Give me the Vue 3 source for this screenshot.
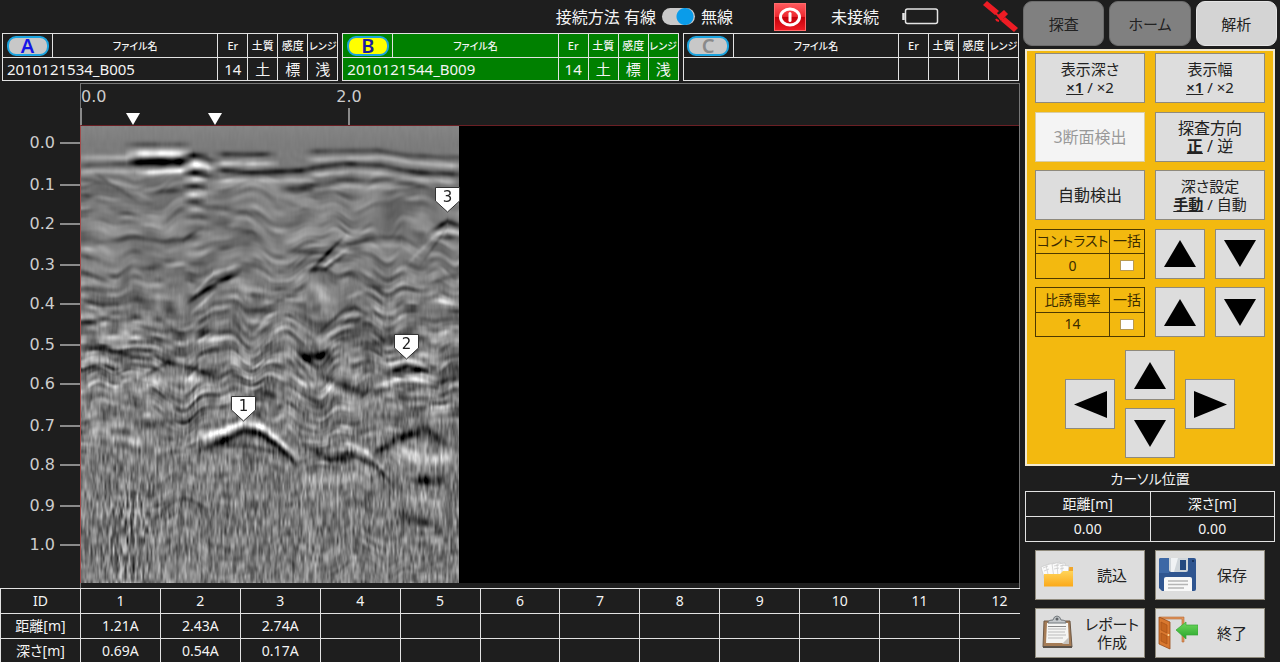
<script setup>
import { onMounted, ref } from 'vue'

const files = [
  { key: 'A', name: '2010121534_B005', values: ['14', '土', '標', '浅'] },
  { key: 'B', name: '2010121544_B009', values: ['14', '土', '標', '浅'] },
  { key: 'C', name: '', values: ['', '', '', ''] },
]
const active = 'B'
const columns = Array.from({ length: 12 }, (_, i) => i + 1)
const rows = [
  { label: '距離[m]', values: ['1.21A', '2.43A', '2.74A'] },
  { label: '深さ[m]', values: ['0.69A', '0.54A', '0.17A'] },
]
const depths = [60, 102, 141, 182, 221, 262, 301, 343, 382, 423, 462].map((top, i) => ({
  label: (i / 10).toFixed(1),
  top,
}))
const distances = [
  { label: '0.0', left: 0 },
  { label: '2.0', left: 268 },
]
const pins = [52, 134]
const markers = [
  { id: 1, left: 162, top: 270 },
  { id: 2, left: 325, top: 208 },
  { id: 3, left: 366, top: 61 },
]
const adjusters = [
  { label: 'コントラスト', value: '0' },
  { label: '比誘電率', value: '14' },
]

/* Reflections: [strength, thickness, x, y, x, y, ...] */
const echoes = [
  [-40, 3, 50, 18, 103, 18], [150, 4, 52, 27, 103, 27], [50, 3, 0, 31, 50, 31],
  [-190, 4, 54, 36, 104, 35], [-55, 3, 0, 39, 50, 37], [140, 3, 62, 46, 104, 44], [45, 3, 0, 45, 60, 45],
  [-150, 3, 107, 29, 119, 29], [150, 4, 107, 38, 121, 38], [-150, 3, 108, 46, 118, 46],
  [100, 3, 109, 53, 118, 53], [-120, 3, 109, 60, 118, 60], [100, 3, 109, 68, 118, 68],
  [-90, 3, 109, 75, 117, 75], [60, 3, 109, 83, 117, 83], [-40, 3, 108, 91, 118, 91],
  [-45, 3, 108, 112, 119, 109], [45, 3, 108, 118, 120, 118], [-50, 3, 108, 137, 120, 137],
  [-75, 3, 120, 32, 132, 34], [90, 3, 120, 40, 132, 42], [-60, 3, 120, 50, 130, 50],
  [-75, 3, 139, 28, 190, 28], [85, 3, 137, 37, 190, 37], [-100, 3, 138, 44, 170, 46, 225, 44],
  [55, 3, 140, 54, 225, 54], [-65, 3, 205, 62, 225, 62],
  [-50, 3, 230, 25, 296, 24, 326, 29, 376, 31], [55, 3, 232, 33, 300, 31, 330, 36, 376, 40],
  [-90, 3, 226, 42, 262, 37, 299, 39, 336, 46, 376, 48], [50, 3, 230, 49, 270, 45, 300, 47, 336, 53, 376, 56],
  [-60, 3, 225, 59, 262, 54, 305, 54, 340, 59], [35, 3, 230, 65, 266, 60, 320, 61],
  [-50, 3, 0, 53, 18, 55], [-55, 3, 75, 65, 100, 64], [-45, 3, 0, 68, 12, 71],
  [40, 3, 30, 55, 65, 71], [-35, 3, 18, 50, 52, 72],
  [-65, 3, 87, 114, 102, 113, 114, 106], [-35, 3, 12, 117, 54, 111, 88, 116],
  [-35, 3, 139, 82, 165, 86, 185, 98], [30, 3, 139, 88, 165, 92, 185, 104],
  [-35, 3, 139, 100, 170, 105, 180, 112], [-30, 3, 205, 76, 222, 82],
  [-125, 3, 354, 102, 366, 95, 378, 99], [100, 3, 358, 107, 366, 104, 377, 106], [-80, 3, 359, 111, 374, 111],
  [-105, 3, 236, 137, 256, 117], [100, 3, 243, 139, 260, 127], [-75, 3, 229, 144, 244, 142, 258, 132],
  [-95, 3, 264, 118, 279, 115], [-75, 3, 212, 125, 229, 125], [35, 3, 262, 110, 280, 106],
  [-40, 3, 285, 111, 320, 111, 340, 123], [35, 3, 288, 119, 320, 119, 336, 130],
  [-35, 3, 345, 130, 365, 102], [30, 3, 330, 133, 356, 107],
  [95, 3, 119, 160, 132, 147, 152, 142], [-150, 3, 112, 172, 126, 162, 136, 156, 152, 149],
  [95, 3, 116, 181, 129, 169], [-60, 3, 62, 142, 76, 142], [-50, 3, 114, 187, 127, 184],
  [60, 3, 0, 121, 10, 123], [-80, 3, 0, 129, 12, 132], [-55, 3, 0, 145, 20, 152],
  [-70, 3, 3, 160, 18, 164], [85, 3, 0, 186, 16, 187], [-85, 3, 0, 196, 14, 195], [-50, 3, 0, 173, 20, 180],
  [-45, 3, 20, 192, 50, 196, 80, 206, 105, 200], [-50, 3, 0, 221, 22, 221, 48, 229],
  [50, 3, 22, 211, 48, 211, 72, 219], [-40, 3, 110, 205, 150, 206], [35, 3, 102, 214, 150, 213],
  [-75, 6, 228, 184, 243, 180], [-75, 3, 266, 184, 273, 181, 284, 187], [65, 5, 230, 160, 242, 163],
  [-55, 4, 264, 148, 278, 148], [60, 3, 265, 171, 280, 166], [-60, 3, 165, 168, 178, 168],
  [-60, 3, 168, 184, 187, 184], [65, 3, 170, 195, 183, 196], [-60, 3, 168, 206, 182, 204],
  [70, 3, 354, 173, 376, 178], [-55, 3, 350, 156, 375, 148], [-40, 3, 285, 160, 320, 162],
  [-55, 3, 240, 204, 262, 184], [55, 3, 245, 210, 264, 193], [-50, 3, 290, 185, 312, 192],
  [-170, 5, 220, 231, 245, 230], [60, 4, 228, 215, 240, 213], [-75, 4, 295, 216, 315, 211, 342, 212],
  [-55, 3, 257, 213, 267, 213], [-50, 3, 358, 233, 378, 229], [-55, 3, 358, 256, 378, 251],
  [110, 3, 309, 238, 325, 233, 340, 237], [-130, 3, 309, 245, 326, 240, 339, 243],
  [70, 3, 296, 259, 326, 250, 346, 256], [-55, 3, 292, 266, 326, 257, 342, 260],
  [80, 4, 4, 232, 25, 234, 40, 240], [-70, 3, 10, 240, 25, 240, 40, 249],
  [-75, 3, 62, 250, 86, 236, 112, 242, 132, 250], [65, 4, 59, 264, 79, 254, 112, 252, 136, 260],
  [45, 5, 5, 262, 25, 260, 40, 266],
  [80, 5, 218, 257, 240, 258, 273, 274], [-85, 4, 245, 252, 279, 266], [-60, 7, 222, 278, 244, 282],
  [55, 5, 230, 301, 237, 301], [-45, 4, 57, 296, 90, 297, 118, 294], [35, 5, 5, 310, 75, 315],
  [150, 4, 122, 310, 139, 305, 162, 296, 182, 301, 209, 324],
  [-125, 4, 120, 323, 142, 314, 162, 305, 180, 308, 196, 319, 213, 336], [-50, 3, 150, 320, 174, 320],
  [-45, 4, 180, 293, 198, 300],
  [-95, 4, 229, 322, 249, 334, 272, 329, 296, 341, 306, 352], [85, 4, 265, 315, 286, 327, 300, 340],
  [-120, 5, 296, 327, 316, 312, 346, 304, 359, 312], [80, 7, 315, 327, 346, 334, 370, 330],
  [-50, 4, 356, 315, 378, 322], [60, 6, 345, 286, 368, 286],
  [-125, 5, 335, 354, 357, 354], [55, 8, 330, 373, 358, 372], [-50, 5, 315, 390, 340, 395, 360, 402],
  [-40, 5, 266, 376, 284, 376], [40, 6, 218, 355, 280, 350], [-35, 4, 75, 390, 90, 378, 118, 369],
]

const scan = ref(null)

function hash(x, y, seed) {
  let h = Math.imul(x, 374761393) + Math.imul(y, 668265263) + Math.imul(seed, 974634777)
  h = Math.imul(h ^ (h >>> 13), 1274126177)
  h = Math.imul(h ^ (h >>> 15), 2246822519)
  return ((h ^ (h >>> 16)) >>> 0) / 2147483648 - 1
}

function noise(x, y, seed) {
  const ix = Math.floor(x)
  const iy = Math.floor(y)
  let fx = x - ix
  let fy = y - iy
  fx = fx * fx * (3 - 2 * fx)
  fy = fy * fy * (3 - 2 * fy)
  const a = hash(ix, iy, seed) * (1 - fx) + hash(ix + 1, iy, seed) * fx
  const b = hash(ix, iy + 1, seed) * (1 - fx) + hash(ix + 1, iy + 1, seed) * fx
  return a * (1 - fy) + b * fy
}

const ramp = (v, from, to) => Math.min(1, Math.max(0, (v - from) / (to - from)))

onMounted(() => {
  const el = scan.value
  const { width, height } = el
  const field = new Float32Array(width * height)
  for (let y = 0; y < height; y++) {
    const layered = 30 * ramp(y, 18, 60) * (1 - 0.6 * ramp(y, 280, 340))
    const middle = (14 * ramp(y, 40, 80) + 34 * ramp(y, 110, 200)) * (1 - 0.75 * ramp(y, 270, 350))
    const grain = 2 + 12 * ramp(y, 130, 230) + 26 * ramp(y, 210, 380)
    for (let x = 0; x < width; x++) {
      const bend = 12 * noise(x / 34, y / 70, 5) + 6 * noise(x / 17, y / 50, 8)
      const burst = Math.exp(-((x - 46) ** 2) / 500) * ramp(y, 310, 400) * 28
      let v = 132 - 8 * ramp(y, 0, 18)
      v += layered * noise(x / 24, (y + bend) / 5, 1)
      v += middle * noise(x / 11, (y + bend) / 5, 2)
      v += (grain + burst) * (noise(x / 2, y / 9, 3) + 0.5 * noise(x / 1.4, y / 6, 4))
      field[y * width + x] = v
    }
  }
  for (const [strength, thickness, ...line] of echoes) {
    const first = line[0]
    const last = line[line.length - 2]
    const taper = Math.min(9, (last - first) / 2 + 3)
    for (let x = Math.max(0, first - 9); x < Math.min(width, last + 10); x++) {
      let i = 0
      while (i < line.length - 4 && x > line[i + 2]) i += 2
      const t = (x - line[i]) / (line[i + 2] - line[i])
      const centre = line[i + 1] + t * (line[i + 3] - line[i + 1])
      const fade = ramp(x, first - 9, first - 9 + taper * 1.6) * ramp(last + 9 - x, 0, taper * 1.6)
      const gain = 0.78 + 0.22 * noise(x / 9, centre / 6, 11)
      for (let y = Math.max(0, Math.floor(centre - 16)); y < Math.min(height, centre + 16); y++) {
        const d = (y - centre) / thickness
        field[y * width + x] += strength * gain * fade * Math.exp(-d * d * 0.9)
      }
    }
  }
  const ctx = el.getContext('2d')
  const img = ctx.createImageData(width, height)
  field.forEach((v, i) => {
    img.data[i * 4] = img.data[i * 4 + 1] = img.data[i * 4 + 2] = v
    img.data[i * 4 + 3] = 255
  })
  ctx.putImageData(img, 0, 0)
})
</script>

<template>
  <div class="app">
    <main class="main">
      <header class="status">
        <label class="link-mode">
          <span>接続方法 有線</span>
          <input type="checkbox" class="toggle" checked>
          <span>無線</span>
        </label>
        <button class="power" aria-label="電源">
          <svg width="32" height="28" viewBox="0 0 32 28">
            <defs>
              <linearGradient id="powerFill" x1="0" y1="0" x2="0" y2="1">
                <stop offset="0" stop-color="#ff5a5e" /><stop offset=".48" stop-color="#ee2930" />
                <stop offset=".5" stop-color="#c4000a" /><stop offset="1" stop-color="#f01c24" />
              </linearGradient>
            </defs>
            <rect x=".5" y=".5" width="31" height="27" fill="url(#powerFill)" stroke="#ff6b6b" />
            <ellipse cx="16" cy="14" rx="9.5" ry="8" fill="none" stroke="#fff" stroke-width="3" />
            <path d="M16 10.500v7" stroke="#fff" stroke-width="3" stroke-linecap="round" />
          </svg>
        </button>
        <span class="unlinked">未接続</span>
        <svg class="battery" width="37" height="17" viewBox="0 0 37 17" fill="none" stroke="#e4e4e4">
          <rect x="3.5" y="1" width="32" height="14.5" rx="2" stroke-width="1.5" />
          <path d="M1.5 5v7" stroke-width="2.5" />
        </svg>
        <svg class="satellite" width="36" height="31" viewBox="0 0 36 31" fill="#ed1c24">
          <path d="M1 4L5 0L17 10L13 14Z M23 16L36 27L32 31L19 20Z" />
          <path d="M15 15L22 9L26 13L19 20Z" />
          <path d="M12 11L24 21" stroke="#ed1c24" stroke-width="2" />
          <path d="M14 18a4 3 0 0 0 3 2" fill="none" stroke="#ed1c24" stroke-width="2" />
        </svg>
      </header>

      <section class="files">
        <table v-for="f in files" :key="f.key" class="file" :class="{ active: f.key === active }">
          <colgroup><col class="c-key"><col><col class="c-s"><col class="c-s"><col class="c-s"><col class="c-s"></colgroup>
          <thead>
            <tr>
              <th class="key-cell"><button class="key" :class="'key-' + f.key">{{ f.key }}</button></th>
              <th class="kana">ファイル名</th><th>Er</th><th>土質</th><th>感度</th><th class="kana">レンジ</th>
            </tr>
          </thead>
          <tbody>
            <tr>
              <td colspan="2" class="name">{{ f.name }}</td>
              <td v-for="(v, i) in f.values" :key="i">{{ v }}</td>
            </tr>
          </tbody>
        </table>
      </section>

      <section class="chart">
        <div class="depth">
          <div v-for="d in depths" :key="d.label" class="depth-mark" :style="{ top: d.top + 'px' }">
            <span>{{ d.label }}</span><i></i>
          </div>
        </div>
        <div class="view">
          <div class="ruler">
            <div v-for="d in distances" :key="d.label" class="ruler-mark" :style="{ left: d.left + 'px' }">
              <span>{{ d.label }}</span><i></i>
            </div>
            <svg v-for="p in pins" :key="p" class="pin" :style="{ left: p + 'px' }" width="14" height="12" viewBox="0 0 14 12">
              <path d="M0 0H14L7 12Z" fill="#fff" />
            </svg>
          </div>
          <div class="plot">
            <canvas ref="scan" class="scan" width="378" height="457"></canvas>
            <div v-for="m in markers" :key="m.id" class="marker" :style="{ left: m.left + 'px', top: m.top + 'px' }">
              <svg width="25" height="26" viewBox="0 0 25 26">
                <path d="M.5 .5H24.5V14L12.5 25L.5 14Z" fill="#fff" stroke="#333" />
              </svg>
              <span>{{ m.id }}</span>
            </div>
          </div>
        </div>
      </section>

      <div class="results-wrap">
        <table class="results">
          <thead>
            <tr><th>ID</th><th v-for="c in columns" :key="c">{{ c }}</th></tr>
          </thead>
          <tbody>
            <tr v-for="r in rows" :key="r.label">
              <th>{{ r.label }}</th>
              <td v-for="c in columns" :key="c">{{ r.values[c - 1] }}</td>
            </tr>
          </tbody>
        </table>
      </div>
    </main>

    <aside class="side">
      <nav class="tabs">
        <button>探査</button><button>ホーム</button><button class="on">解析</button>
      </nav>

      <section class="panel">
        <div class="controls">
          <button class="btn"><span>表示深さ</span><span><b>×1</b> / ×2</span></button>
          <button class="btn"><span>表示幅</span><span><b>×1</b> / ×2</span></button>
          <button class="btn wide" disabled>3断面検出</button>
          <button class="btn wide"><span>探査方向</span><span><b>正</b> / 逆</span></button>
          <button class="btn wide">自動検出</button>
          <button class="btn"><span>深さ設定</span><span><b>手動</b> / 自動</span></button>
          <template v-for="a in adjusters" :key="a.label">
            <table class="adjust">
              <colgroup><col><col class="c-all"></colgroup>
              <tbody>
                <tr><th>{{ a.label }}</th><th>一括</th></tr>
                <tr><td>{{ a.value }}</td><td><input type="checkbox" :aria-label="a.label + ' 一括'"></td></tr>
              </tbody>
            </table>
            <div class="pair">
              <button class="btn arrow" :aria-label="a.label + ' 上げる'"><svg width="32" height="27"><path d="M16 0L32 27H0Z" /></svg></button>
              <button class="btn arrow" :aria-label="a.label + ' 下げる'"><svg width="32" height="27"><path d="M0 0H32L16 27Z" /></svg></button>
            </div>
          </template>
        </div>
        <div class="pad">
          <button class="btn arrow left" aria-label="左"><svg width="33" height="27"><path d="M0 13.5L33 0V27Z" /></svg></button>
          <button class="btn arrow up" aria-label="上"><svg width="32" height="27"><path d="M16 0L32 27H0Z" /></svg></button>
          <button class="btn arrow below" aria-label="下"><svg width="32" height="27"><path d="M0 0H32L16 27Z" /></svg></button>
          <button class="btn arrow right" aria-label="右"><svg width="33" height="27"><path d="M0 0L33 13.5L0 27Z" /></svg></button>
        </div>
      </section>

      <table class="cursor">
        <caption>カーソル位置</caption>
        <thead><tr><th>距離[m]</th><th>深さ[m]</th></tr></thead>
        <tbody><tr><td>0.00</td><td>0.00</td></tr></tbody>
      </table>

      <section class="actions">
        <button class="btn action">
          <svg width="40" height="36" viewBox="0 0 40 36">
            <defs>
              <linearGradient id="folderFill" x1="0" y1="0" x2="0" y2="1">
                <stop offset="0" stop-color="#ffd45a" /><stop offset="1" stop-color="#fba919" />
              </linearGradient>
            </defs>
            <path d="M6 13H20L23 10H35V29H6Z" fill="#f0a62a" />
            <g fill="#fbfbfb" stroke="#c9c9c9" stroke-width=".7">
              <path d="M3 10L11 7L15 21L7 24Z" /><path d="M8 8L16 6L19 20L11 22Z" />
              <path d="M14 7L22 5L24 19L16 21Z" /><path d="M19 7L27 6L28 19L20 20Z" /><path d="M24 8L31 9L30 19L24 20Z" />
            </g>
            <path d="M5 11l5-2M6 14l5-2M16 9l5-1M16 12l5-1M22 9l4-1M22 12l4-1" stroke="#ccc" stroke-width=".8" />
            <path d="M6 17H22L25 14H35V29.500H6Z" fill="url(#folderFill)" />
          </svg>
          <span>読込</span>
        </button>
        <button class="btn action">
          <svg width="40" height="36" viewBox="0 0 40 36">
            <path d="M1 3Q1 1 3 1H36Q38 1 38 3V32Q38 34 36 34H4L1 31Z" fill="#2f5590" />
            <path d="M1 3Q1 1 3 1H11V16H1Z" fill="#3d68a6" />
            <path d="M11 1H30V13Q30 15 28 15H13Q11 15 11 13Z" fill="#cfd5da" />
            <path d="M13 1H20L16 15H13Z" fill="#f0f2f4" />
            <rect x="22" y="3" width="6" height="10" fill="#24497f" />
            <path d="M6 22Q6 20 8 20H32Q34 20 34 22V34H6Z" fill="#f8f8f8" />
            <path d="M10 24H30M10 27.500H30M10 31H26" stroke="#b5b5b5" stroke-width="1.3" />
            <rect x="34" y="3" width="2" height="2" fill="#18335f" />
          </svg>
          <span>保存</span>
        </button>
        <button class="btn action">
          <svg width="40" height="36" viewBox="0 0 40 36">
            <path d="M6 6H32L34 32H5Z" fill="#a57c56" stroke="#6c5846" />
            <path d="M9 8H30L31 28H8Z" fill="#f5f5f3" />
            <path d="M24 29L31 22V29Z" fill="#c7c3bd" />
            <path d="M10 14H28M10 17H27M10 20H28M10 23H25" stroke="#bbb" stroke-width="1" />
            <path d="M10 11.500h18" stroke="#888" />
            <path d="M10 8Q10 5 15 5Q16 1 19 1Q22 1 23 5Q28 5 28 8Z" fill="#c3c7ca" stroke="#72787c" />
            <circle cx="19" cy="4" r="1.500" fill="#5f6467" />
            <path d="M5 31H34V33H5Z" fill="#5a524a" />
          </svg>
          <span>レポート<br>作成</span>
        </button>
        <button class="btn action">
          <svg width="40" height="36" viewBox="0 0 40 36">
            <defs>
              <linearGradient id="leaveFill" x1="0" y1="0" x2="0" y2="1">
                <stop offset="0" stop-color="#6fd85d" /><stop offset="1" stop-color="#28a52b" />
              </linearGradient>
            </defs>
            <path d="M2 2H26V27H24V4H4Z" fill="#e0935b" stroke="#b56a33" stroke-width=".6" />
            <path d="M1 2L12 7V34L1 29Z" fill="#d9782f" stroke="#9b4d17" stroke-width=".8" />
            <path d="M3 7L9 10V18L3 15ZM3 18L9 21V29L3 26Z" fill="#c5651f" stroke="#a65218" stroke-width=".7" />
            <circle cx="10.500" cy="20" r="1" fill="#ffe0a0" />
            <path d="M18 15L28 7V10H40V20H28V24Z" fill="url(#leaveFill)" stroke="#36a637" stroke-width=".7" />
          </svg>
          <span>終了</span>
        </button>
      </section>
    </aside>
  </div>
</template>

<style>
body { margin: 0; background: #1e1e1e; }
</style>

<style scoped>
.app {
  display: grid;
  grid-template-columns: minmax(0, 1fr) 260px;
  height: 100vh;
  min-height: 662px;
  box-sizing: border-box;
  background: #1e1e1e;
  color: #f4f4f4;
  font: 15px/20px "Noto Sans", "Noto Sans CJK JP", sans-serif;
  font-feature-settings: "palt";
  overflow: hidden;
}
button { font: inherit; font-feature-settings: inherit; color: #222; padding: 0; margin: 0; cursor: pointer; }
svg { display: block; flex: none; }
table { border-collapse: collapse; table-layout: fixed; }
th, td { padding: 0; font-weight: 400; text-align: center; white-space: nowrap; }

.main { display: flex; flex-direction: column; min-height: 0; overflow: hidden; }

.status { display: flex; align-items: center; justify-content: flex-end; height: 33px; padding-right: 2px; flex: none; }
.link-mode { display: flex; align-items: center; gap: 6px; font-size: 16px; }
.toggle {
  appearance: none; width: 33px; height: 17px; margin: 0; border-radius: 9px;
  background: radial-gradient(circle at 23px 50%, #0a9cea 8px, #c9c9c9 9px);
}
.power { margin-left: 41px; border: 0; background: none; }
.unlinked { margin-left: 25px; font-size: 16px; }
.battery { margin-left: 23px; }
.satellite { margin-left: 43px; }

.files { display: grid; grid-template-columns: repeat(3, 1fr); gap: 4px; padding: 0 1px 0 2px; flex: none; }
.file { width: 100%; }
.file.active { background: #008000; }
.file th, .file td { border: 1px solid #e2e2e2; height: 22px; line-height: 20px; }
.file th { font-size: 11px; font-weight: 500; height: 23px; }
.file .kana { font-size: 10px; }
.file .name { text-align: left; padding-left: 4px; }
.c-key { width: 50px; }
.c-s { width: 30px; }
.key {
  display: block; width: 42px; height: 20px; margin: 0 auto; border: 2px solid #1ba4e0; border-radius: 9px;
  background: #c8c8c8; color: #1414e6; font-family: "Noto Sans", sans-serif; font-size: 20px; font-weight: 600; line-height: 16px;
}
.key-B { background: #ff0; color: #1c1ca0; }
.key-C { color: #8a8a8a; }

.chart { flex: 1; display: grid; grid-template-columns: 80px minmax(0, 1fr); min-height: 0; padding-top: 2px; }
.depth { position: relative; font: 16px/20px "DejaVu Sans", sans-serif; color: #ccc; }
.depth-mark { position: absolute; right: 0; display: flex; align-items: center; gap: 5px; height: 20px; margin-top: -10px; }
.depth-mark i { width: 20px; height: 2px; background: #8a8a8a; }
.view { display: flex; flex-direction: column; border: 1px solid #777; border-bottom: 0; min-width: 0; }
.ruler { position: relative; height: 41px; flex: none; font: 16px/20px "DejaVu Sans", sans-serif; color: #ccc; }
.ruler-mark { position: absolute; top: 3px; height: 38px; }
.ruler-mark span { display: block; transform: translateX(-50%); }
.ruler-mark:first-child span { transform: none; }
.ruler-mark i { position: absolute; left: -1px; bottom: 0; width: 2px; height: 17px; background: #8a8a8a; }
.pin { position: absolute; bottom: 0; margin-left: -7px; }
.plot { position: relative; flex: 1; margin-bottom: 5px; background: #000; border-top: 1px solid #6a1f24; border-left: 1px solid #a04c4c; margin-left: -1px; overflow: hidden; }
.scan { display: block; width: 378px; height: 457px; }
.marker { position: absolute; width: 25px; height: 26px; margin-left: -12px; color: #222; font: 15px/20px "DejaVu Sans", sans-serif; text-align: center; }
.marker svg { position: absolute; inset: 0; }
.marker span { position: relative; }

.results-wrap { flex: none; height: 74px; overflow: hidden; }
.results { width: calc(100% + 20px); font-size: 14px; line-height: 20px; }
.results th, .results td { border: 1px solid #e2e2e2; height: 24px; }

.side { display: flex; flex-direction: column; padding: 1px 5px 0; }
.tabs { display: grid; grid-template-columns: repeat(3, 1fr); gap: 5px; margin: 0 -2px 3px; flex: none; }
.tabs button { height: 45px; border: 1px solid #6c6c6c; border-radius: 9px; background: #808080; }
.tabs .on { background: #d4d4d4; border-color: #e4e4e4; }

.panel { border: 2px solid #f3ead0; background: #f3b90f; padding: 2px 8px 6px; flex: none; }
.controls { display: grid; grid-template-columns: 1fr 1fr; column-gap: 10px; grid-auto-rows: 50px; align-content: space-between; height: 284px; }
.btn {
  display: flex; flex-direction: column; align-items: center; justify-content: center;
  height: 50px; box-sizing: border-box; border: 1px solid #8f8a7c; background: #ddd; line-height: 18px;
}
.btn b { text-decoration: underline; font-weight: 600; }
.btn:disabled { background: #f4f4f4; border-color: #d9cda4; color: #999; }
.wide { font-size: 16px; }
.pair { display: flex; justify-content: space-between; }
.arrow { width: 50px; }
.adjust { width: 100%; height: 50px; color: #3b2c00; font-size: 14px; line-height: 18px; }
.adjust th, .adjust td { border: 1px solid #4d3900; }
.adjust input { appearance: none; display: block; width: 14px; height: 11px; margin: 0 auto; background: #fff; border: 1px solid #b99a50; }
.c-all { width: 35px; }
.pad { display: grid; grid-template-columns: repeat(3, 50px); gap: 8px 10px; justify-content: center; margin-top: 13px; }
.left, .right { grid-row: 1 / 3; align-self: center; }
.left { grid-column: 1; }
.up, .below { grid-column: 2; }
.right { grid-column: 3; }

.cursor { width: 100%; flex: none; }
.cursor caption { height: 25px; font-size: 14px; line-height: 25px; }
.cursor th, .cursor td { border: 1px solid #e2e2e2; height: 24px; font-size: 14px; }

.actions { display: grid; grid-template-columns: 1fr 1fr; gap: 8px 10px; padding: 0 10px; margin-top: 8px; flex: none; }
.action { flex-direction: row; justify-content: flex-start; padding: 0 2px; }
.action span { flex: 1; padding-left: 4px; text-align: center; }
</style>
